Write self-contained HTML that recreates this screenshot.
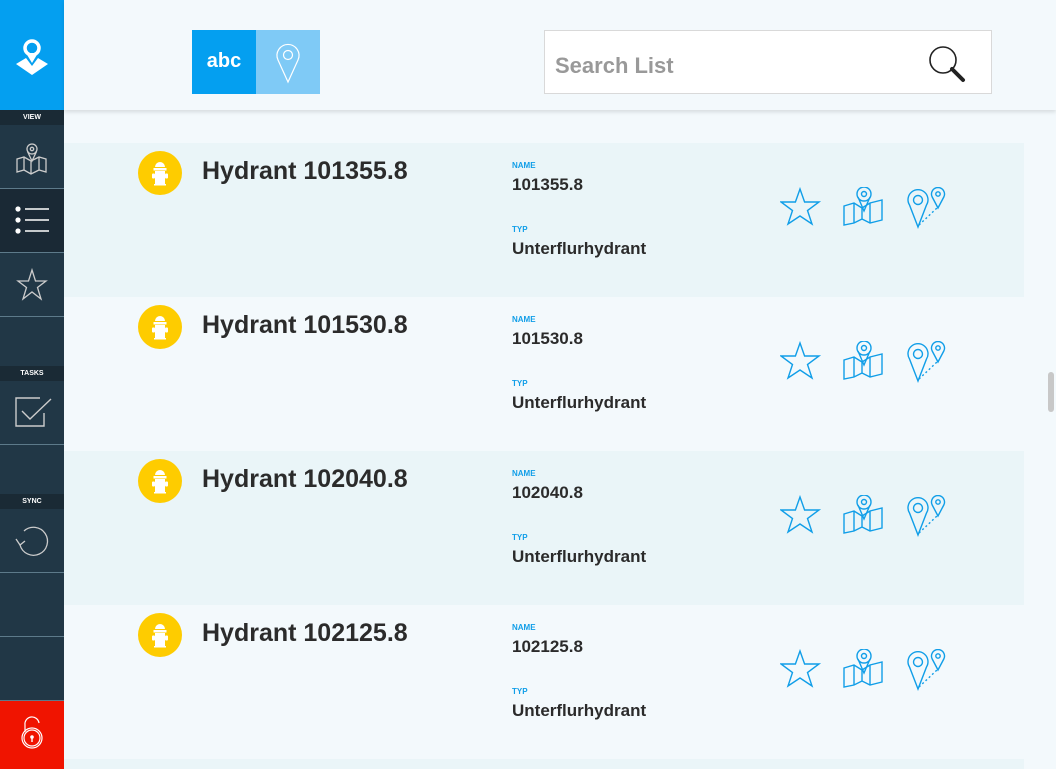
<!DOCTYPE html>
<html><head><meta charset="utf-8"><style>
*{margin:0;padding:0;box-sizing:border-box}
html,body{width:1056px;height:769px;overflow:hidden}
body{background:#f3f9fc;font-family:"Liberation Sans",sans-serif;position:relative}
.sb{position:absolute;left:0;top:0;width:64px;height:769px;background:#213746}
.abs{position:absolute}
.lbl{position:absolute;left:0;width:64px;height:15px;background:#1a2a35;color:#fff;font-size:7px;font-weight:bold;text-align:center;line-height:15px}
.line{position:absolute;left:0;width:64px;height:1px;background:#5d7a8a}
.row{position:absolute;left:64px;width:960px;height:154px}
.t{background:#eaf5f8}
.h{position:absolute;left:138px;font-size:25px;font-weight:bold;color:#2b2b2b}
.k{position:absolute;left:512px;font-size:8px;font-weight:bold;color:#109ee8}
.v{position:absolute;left:512px;font-size:17px;font-weight:bold;color:#2b2b2b}
</style></head><body>
<div class="sb"></div>
<div class="abs" style="left:0;top:0;width:64px;height:110px;background:#049ff0">
<svg width="64" height="110"><circle cx="32" cy="48" r="7" fill="none" stroke="#fff" stroke-width="3.5"/><path d="M26 53 L32 63 L38 53Z" fill="#fff"/><path d="M16 64 L26 58 L32 66 L38 58 L48 64 L32 75Z" fill="#fff"/></svg></div>
<div class="lbl" style="top:110px">VIEW</div>
<svg class="abs" style="left:0;top:125px" width="64" height="63"><g fill="none" stroke="#ccc" stroke-width="1.3"><path d="M17 34 L24 32 L31 36 L39 32 L46 34 L46 47 L39 45 L31 49 L24 45 L17 47Z M24 32 V45 M31 36 V49 M39 32 V45"/><circle cx="32" cy="24" r="5"/><circle cx="32" cy="24" r="1.7"/><path d="M27.5 26.5 L32 36 L36.5 26.5"/></g></svg>
<div class="line" style="top:188px"></div>
<div class="abs" style="left:0;top:189px;width:64px;height:63px;background:#1a2935"></div>
<div class="abs" style="left:64px;top:211px;border-left:8px solid #1a2935;border-top:9px solid transparent;border-bottom:9px solid transparent"></div>
<svg class="abs" style="left:0;top:189px" width="64" height="63"><g fill="#fff"><circle cx="18" cy="20" r="2.6"/><circle cx="18" cy="31" r="2.6"/><circle cx="18" cy="42" r="2.6"/></g><g stroke="#fff" stroke-width="1.4"><path d="M25 20H49M25 31H49M25 42H49"/></g></svg>
<div class="line" style="top:252px"></div>
<svg class="abs" style="left:0;top:253px" width="64" height="63"><path d="M32 17 L35.5 28 L46 28 L37.5 34.5 L41 46 L32 39 L23 46 L26.5 34.5 L18 28 L28.5 28Z" fill="none" stroke="#ccc" stroke-width="1.3"/></svg>
<div class="line" style="top:316px"></div>
<div class="lbl" style="top:366px">TASKS</div>
<svg class="abs" style="left:0;top:381px" width="64" height="63"><g fill="none" stroke="#ccc" stroke-width="1.4"><path d="M44 32 V45 H16 V17 H40"/><path d="M22 30 L30 38 L51 18"/></g></svg>
<div class="line" style="top:444px"></div>
<div class="lbl" style="top:494px">SYNC</div>
<svg class="abs" style="left:0;top:509px" width="64" height="63"><g fill="none" stroke="#ccc" stroke-width="1.3"><path d="M20 36 A14 14 0 1 0 24 22"/><path d="M16 30 L20 36 L25 32"/></g></svg>
<div class="line" style="top:572px"></div>
<div class="line" style="top:636px"></div>
<div class="line" style="top:700px"></div>
<div class="abs" style="left:0;top:701px;width:64px;height:68px;background:#f01400">
<svg width="64" height="68"><g fill="none" stroke="#fff" stroke-width="1.2"><path d="M25 31 V24 A7 7 0 0 1 39 22"/><circle cx="32" cy="37" r="10"/><circle cx="32" cy="37" r="8"/></g><circle cx="32" cy="36" r="1.8" fill="#fff"/><path d="M32 36V41" stroke="#fff" stroke-width="1.4"/></svg></div>

<div class="abs" style="left:64px;top:0;width:992px;height:110px;background:#f3f9fc;box-shadow:0 2px 4px rgba(0,0,0,.12);z-index:2">
<div class="abs" style="left:128px;top:30px;width:64px;height:64px;background:#049ff0;color:#fff;font-weight:bold;font-size:20px;text-align:center;line-height:62px">abc</div>
<div class="abs" style="left:192px;top:30px;width:64px;height:64px;background:#7fcaf6"><svg width="64" height="64"><g fill="none" stroke="#fff" stroke-width="1.2"><path d="M32 52 L22 30 A11 11 0 1 1 42 30Z"/><circle cx="32" cy="25" r="4.5"/></g></svg></div>
<div class="abs" style="left:480px;top:30px;width:448px;height:64px;background:#fff;border:1px solid #d9d9d9">
<div class="abs" style="left:10px;top:22px;font-size:22px;font-weight:bold;color:#999">Search List</div>
<svg class="abs" style="left:378px;top:10px" width="50" height="44"><circle cx="20" cy="19" r="13" fill="none" stroke="#222" stroke-width="1.6"/><path d="M29 28 L40 39" stroke="#222" stroke-width="4" stroke-linecap="round"/></svg></div>
</div>

<div class="row t" style="top:143px"></div>
<div class="row t" style="top:451px"></div>
<div class="row t" style="top:759px;height:10px"></div>
<div class="abs" style="left:1048px;top:372px;width:6px;height:40px;background:#c8c8c8;border-radius:3px"></div>

<svg width="0" height="0" style="position:absolute"><defs>
<g id="hy"><circle cx="22" cy="22" r="22" fill="#fecc00"/><g fill="#fff"><path d="M17 16 A5 5 0 0 1 27 16Z"/><rect x="15.5" y="17" width="13" height="2.5"/><rect x="17" y="20" width="10" height="13"/><rect x="14" y="22.5" width="3" height="5" rx="1"/><rect x="27" y="22.5" width="3" height="5" rx="1"/><rect x="16" y="33" width="12" height="1.5"/></g></g>
<g id="ic" fill="none" stroke="#109ee8" stroke-width="1.4">
<path d="M20 2 L24.6 15 L39 15 L27.5 23.5 L32 37 L20 29 L8 37 L12.5 23.5 L1 15 L15.4 15Z"/>
<g transform="translate(63,0)"><path d="M1 21 L11 18 L19 23 L27 18 L39 15 L39 35 L27 38 L19 34 L11 38 L1 40Z M11 18 V38 M19 23 V34 M27 18 V38" transform="translate(0,-2)"/><circle cx="21" cy="7" r="7"/><circle cx="21" cy="7" r="2.5"/><path d="M15 10 L21 24 L27 10"/></g>
<g transform="translate(128,0)"><path d="M10 40 L1.5 18 A10 10 0 1 1 18.5 18Z"/><circle cx="10" cy="13" r="4.5"/><path d="M30 21 L24.2 10 A6.5 6.5 0 1 1 35.8 10Z"/><circle cx="30" cy="7" r="2.2"/><path d="M11 38 L29 21" stroke-dasharray="2 2.5"/></g></g>
</defs></svg>

<div>
<svg class="abs" style="left:138px;top:151px" width="44" height="44"><use href="#hy"/></svg>
<div class="h" style="left:202px;top:157px">Hydrant 101355.8</div>
<div class="k" style="top:161px">NAME</div><div class="v" style="top:175px">101355.8</div>
<div class="k" style="top:225px">TYP</div><div class="v" style="top:239px">Unterflurhydrant</div>
<svg class="abs" style="left:780px;top:187px" width="170" height="42"><use href="#ic"/></svg>
</div>
<div>
<svg class="abs" style="left:138px;top:305px" width="44" height="44"><use href="#hy"/></svg>
<div class="h" style="left:202px;top:311px">Hydrant 101530.8</div>
<div class="k" style="top:315px">NAME</div><div class="v" style="top:329px">101530.8</div>
<div class="k" style="top:379px">TYP</div><div class="v" style="top:393px">Unterflurhydrant</div>
<svg class="abs" style="left:780px;top:341px" width="170" height="42"><use href="#ic"/></svg>
</div>
<div>
<svg class="abs" style="left:138px;top:459px" width="44" height="44"><use href="#hy"/></svg>
<div class="h" style="left:202px;top:465px">Hydrant 102040.8</div>
<div class="k" style="top:469px">NAME</div><div class="v" style="top:483px">102040.8</div>
<div class="k" style="top:533px">TYP</div><div class="v" style="top:547px">Unterflurhydrant</div>
<svg class="abs" style="left:780px;top:495px" width="170" height="42"><use href="#ic"/></svg>
</div>
<div>
<svg class="abs" style="left:138px;top:613px" width="44" height="44"><use href="#hy"/></svg>
<div class="h" style="left:202px;top:619px">Hydrant 102125.8</div>
<div class="k" style="top:623px">NAME</div><div class="v" style="top:637px">102125.8</div>
<div class="k" style="top:687px">TYP</div><div class="v" style="top:701px">Unterflurhydrant</div>
<svg class="abs" style="left:780px;top:649px" width="170" height="42"><use href="#ic"/></svg>
</div>
</body></html>
